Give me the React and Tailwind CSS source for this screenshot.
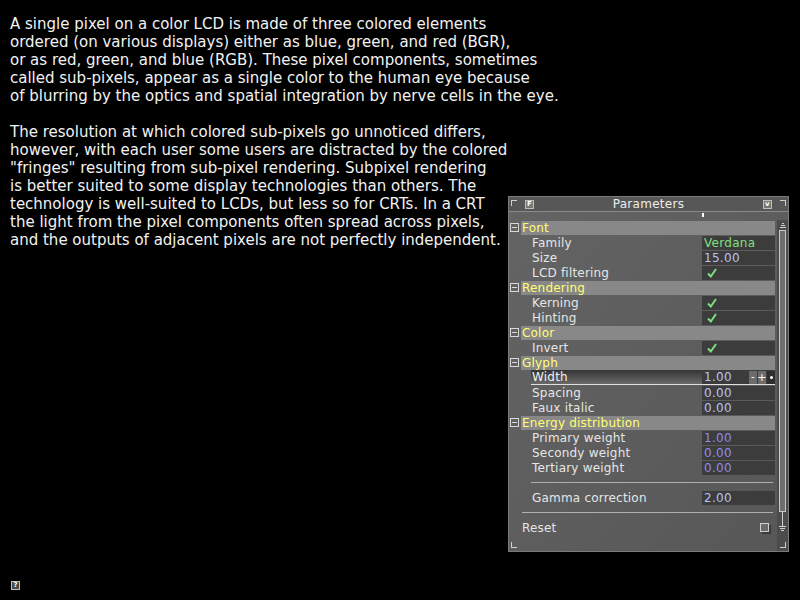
import React from "react";

const panelFont = { fontFamily: '"DejaVu Sans", Verdana, sans-serif' };

const paragraphs = [
  [
    "A single pixel on a color LCD is made of three colored elements",
    "ordered (on various displays) either as blue, green, and red (BGR),",
    "or as red, green, and blue (RGB). These pixel components, sometimes",
    "called sub-pixels, appear as a single color to the human eye because",
    "of blurring by the optics and spatial integration by nerve cells in the eye.",
  ],
  [
    "The resolution at which colored sub-pixels go unnoticed differs,",
    "however, with each user some users are distracted by the colored",
    "\"fringes\" resulting from sub-pixel rendering. Subpixel rendering",
    "is better suited to some display technologies than others. The",
    "technology is well-suited to LCDs, but less so for CRTs. In a CRT",
    "the light from the pixel components often spread across pixels,",
    "and the outputs of adjacent pixels are not perfectly independent.",
  ],
];

const GroupRow = ({ title }) => (
  <div className="flex h-[15px] items-center">
    <div className="ml-[1px] flex h-[9px] w-[9px] items-center justify-center border border-[#d8d8d8]">
      <div className="h-[1px] w-[5px] bg-[#d8d8d8]" />
    </div>
    <div className="ml-[2px] flex h-[14px] flex-1 items-center bg-[#888888] pl-[1px] text-[12px] tracking-[0.2px] text-[#ffff70]">
      {title}
    </div>
  </div>
);

const ItemRow = ({ label, children, valueClass = "text-[#b4c4f4]" }) => (
  <div className="flex h-[15px] items-center">
    <div className="flex-1 pl-[23px] text-[12px] tracking-[0.2px] text-[#e6e6e6]">{label}</div>
    <div className={`flex h-[14px] w-[73px] items-center bg-[#3c3c3c] pl-[2px] text-[12px] tracking-[0.3px] ${valueClass}`}>
      {children}
    </div>
  </div>
);

const Check = () => (
  <svg width="12" height="12" viewBox="0 0 12 12" className="ml-[2px]">
    <path d="M2 6.5 L4.8 9.5 L10 2" fill="none" stroke="#7ee07e" strokeWidth="2" />
  </svg>
);

const Separator = ({ indent }) => (
  <div className="flex h-[15px] items-center">
    <div className={`h-[1px] flex-1 bg-[#b0b0b0] ${indent}`} />
    <div className="w-[2px]" />
  </div>
);

export default function App() {
  return (
    <div className="relative h-[600px] w-[800px] overflow-hidden bg-black">
      {/* ===== TEXT ===== */}
      <div
        className="px-[10px] pt-[15px] text-[15px] leading-[18px] text-[#f2f2f2]"
        style={{ fontFamily: '"DejaVu Sans", Verdana, sans-serif' }}
      >
        {paragraphs.map((p, i) => (
          <div key={i} className="mb-[18px]">
            {p.map((line) => (
              <div key={line} className="whitespace-nowrap">{line}</div>
            ))}
          </div>
        ))}
      </div>

      {/* ===== HELP ICON ===== */}
      <div className="absolute left-[11px] top-[581px] flex h-[9px] w-[9px] items-center justify-center border border-[#bdbdbd] bg-[#4a4a4a] text-[7px] font-bold leading-none text-white" style={panelFont}>
        ?
      </div>

      {/* ===== PARAMETERS PANEL ===== */}
      <div
        className="absolute left-[508px] top-[196px] flex h-[356px] w-[281px] flex-col border border-[#7a7a7a] bg-gradient-to-br from-[#646464] to-[#575757]"
        style={panelFont}
      >
        {/* title bar */}
        <div className="relative flex h-[15px] items-center justify-center border-b border-[#8a8a8a] bg-[#575757] text-[12px] tracking-[0.3px] text-[#ececec]">
          <div className="absolute left-[2px] top-[3px] h-[6px] w-[6px] border-l border-t border-[#cfcfcf]" />
          <div className="absolute left-[16px] top-[3px] flex h-[9px] w-[9px] items-center justify-center border border-[#bdbdbd] bg-[#777] text-[7px] font-bold leading-none text-white">F</div>
          Parameters
          <div className="absolute right-[16px] top-[3px] flex h-[9px] w-[9px] items-center justify-center border border-[#bdbdbd] bg-[#777] text-[7px] font-bold leading-none text-white">v</div>
          <div className="absolute right-[2px] top-[3px] h-[6px] w-[6px] border-r border-t border-[#cfcfcf]" />
        </div>

        {/* column handle */}
        <div className="relative h-[8px]">
          <div className="absolute left-[193px] top-[1px] h-[4px] w-[2px] bg-white" />
        </div>

        <div className="flex flex-1">
          {/* rows */}
          <div className="flex w-[266px] flex-col">
            <GroupRow title="Font" />
            <ItemRow label="Family" valueClass="text-[#80e080]">Verdana</ItemRow>
            <ItemRow label="Size">15.00</ItemRow>
            <ItemRow label="LCD filtering"><Check /></ItemRow>
            <GroupRow title="Rendering" />
            <ItemRow label="Kerning"><Check /></ItemRow>
            <ItemRow label="Hinting"><Check /></ItemRow>
            <GroupRow title="Color" />
            <ItemRow label="Invert"><Check /></ItemRow>
            <GroupRow title="Glyph" />
            {/* hovered row */}
            <div className="ml-[22px] flex h-[15px] items-stretch border-b border-[#e0e0e0]">
              <div className="flex flex-1 items-center bg-gradient-to-b from-[#353535] to-[#6a6a6a] pl-[1px] text-[12px] tracking-[0.2px] text-[#f0f0f0]">Width</div>
              <div className="flex w-[73px] items-center bg-[#3c3c3c] pl-[2px] text-[12px] tracking-[0.3px] text-[#b4c4f4]">
                <span className="flex-1">1.00</span>
                <span className="flex h-[13px] w-[8px] items-center justify-center bg-[#6c6c6c] text-[10px] leading-none text-white">-</span>
                <span className="ml-[1px] flex h-[13px] w-[8px] items-center justify-center bg-[#6c6c6c] text-[11px] leading-none text-white">+</span>
                <span className="ml-[1px] flex h-[13px] w-[8px] items-center justify-center bg-[#2e2e2e]">
                  <span className="h-[3px] w-[3px] rounded-full bg-white" />
                </span>
              </div>
            </div>
            <ItemRow label="Spacing">0.00</ItemRow>
            <ItemRow label="Faux italic">0.00</ItemRow>
            <GroupRow title="Energy distribution" />
            <ItemRow label="Primary weight" valueClass="text-[#8c8cf0]">1.00</ItemRow>
            <ItemRow label="Secondy weight" valueClass="text-[#8c8cf0]">0.00</ItemRow>
            <ItemRow label="Tertiary weight" valueClass="text-[#8c8cf0]">0.00</ItemRow>
            <Separator indent="ml-[22px]" />
            <ItemRow label="Gamma correction">2.00</ItemRow>
            <Separator indent="ml-[13px]" />
            <div className="flex h-[15px] items-center">
              <div className="flex-1 pl-[13px] text-[12px] tracking-[0.2px] text-[#e6e6e6]">Reset</div>
              <div className="mr-[6px] h-[9px] w-[9px] border border-[#cfcfcf] bg-[#6a6a6a] shadow-[2px_2px_0_#3a3a3a]" />
            </div>
            <div className="relative flex-1">
              <div className="absolute bottom-[3px] left-[2px] h-[6px] w-[6px] border-b border-l border-[#cfcfcf]" />
            </div>
          </div>

          {/* scrollbar */}
          <div className="relative ml-[2px] flex w-[11px] flex-col items-center bg-[#4c4c4c]">
            <div className="mt-[3px] flex flex-col items-center gap-[1px]">
              <div className="h-[1px] w-[2px] bg-[#d0d0d0]" />
              <div className="h-[1px] w-[4px] bg-[#d0d0d0]" />
              <div className="h-[1px] w-[6px] bg-[#d0d0d0]" />
            </div>
            <div className="mt-[2px] h-[282px] w-[7px] border border-[#c8c8c8] bg-[#6e6e6e]" />
            <div className="h-[14px] w-[1px] bg-[#d0d0d0]" />
            <div className="flex flex-col items-center gap-[1px]">
              <div className="h-[1px] w-[7px] bg-[#d0d0d0]" />
              <div className="h-[1px] w-[5px] bg-[#d0d0d0]" />
              <div className="h-[1px] w-[3px] bg-[#d0d0d0]" />
            </div>
            <div className="absolute bottom-[3px] right-[2px] h-[6px] w-[6px] border-b border-r border-[#cfcfcf]" />
          </div>
        </div>
      </div>
    </div>
  );
}
